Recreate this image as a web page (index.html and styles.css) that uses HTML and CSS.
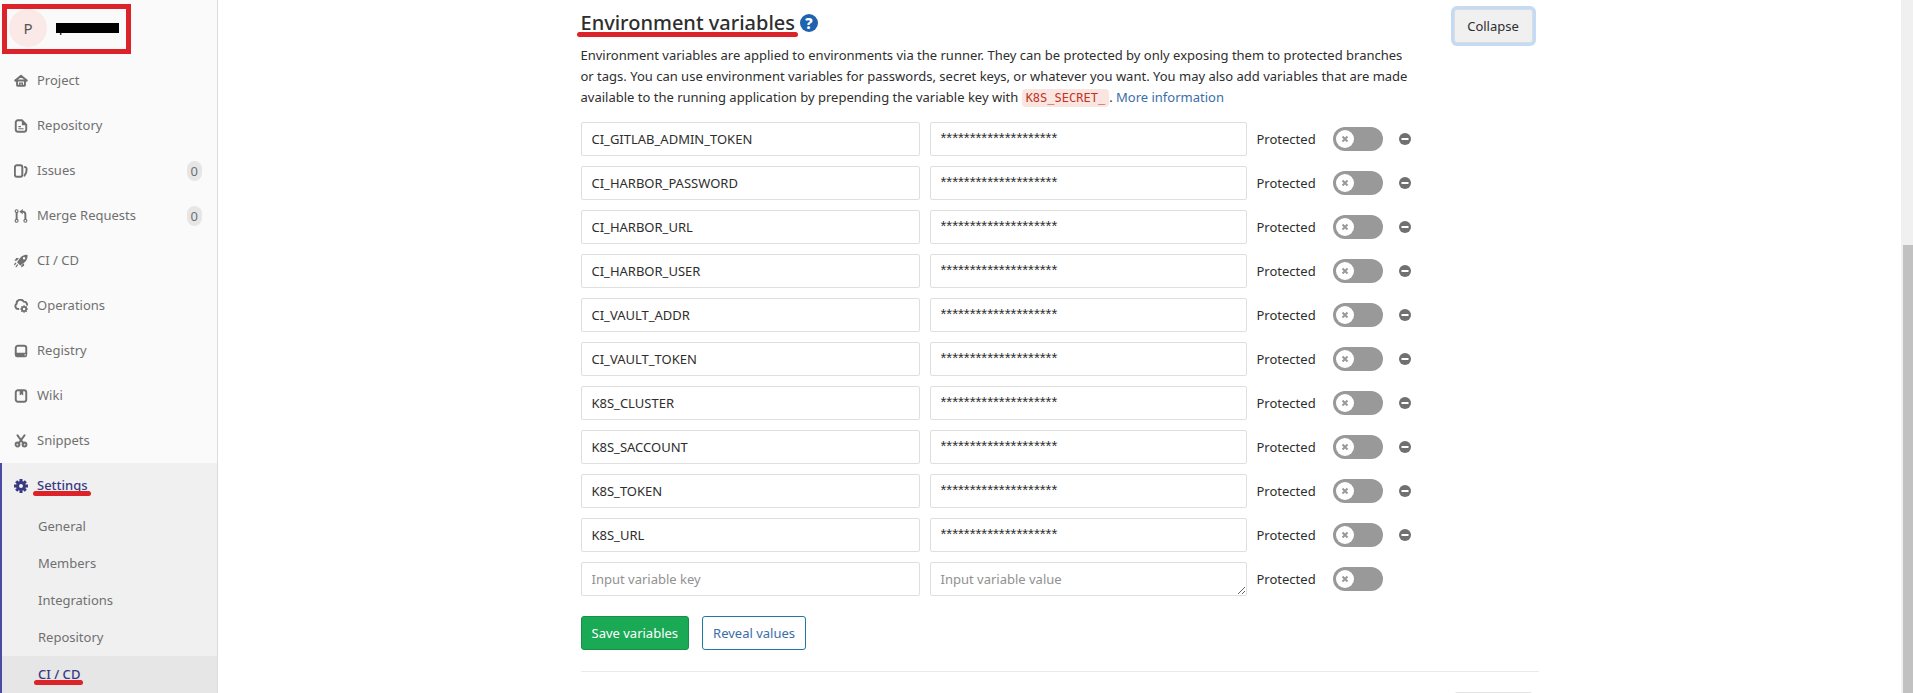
FILE: index.html
```html
<!DOCTYPE html>
<html lang="en">
<head>
<meta charset="utf-8">
<title>CI / CD Settings</title>
<link rel="stylesheet" href="styles.css">
</head>
<body>
<svg class="sprite" aria-hidden="true">
  <symbol id="home" viewBox="0 0 16 16"><path d="M1.500 7.500 8 2l6.500 5.500" fill="none" stroke="currentColor" stroke-width="2.200" stroke-linecap="round" stroke-linejoin="round"/><path d="M1 7.500h14M3.500 7v5.500q0 1 1 1h7q1 0 1-1V7" fill="none" stroke="currentColor" stroke-width="2.200"/><path d="M6.500 13v-2.500h3V13" fill="none" stroke="currentColor" stroke-width="1.500"/></symbol>
  <symbol id="doc" viewBox="0 0 16 16"><path d="M9 1.500H4.500A2.500 2.500 0 0 0 2 4v8a2.500 2.500 0 0 0 2.500 2.500h7A2.500 2.500 0 0 0 14 12V6.500z" fill="none" stroke="currentColor" stroke-width="2.200"/><path d="M9 1v6h6zM5 8h3v1.300H5zM5 10.500h6v1.300H5z" fill="currentColor"/></symbol>
  <symbol id="issues" viewBox="0 0 16 16"><rect x="1" y="1.500" width="8.500" height="13" rx="2.200" fill="none" stroke="currentColor" stroke-width="2.200"/><path d="M12.500 3.500q2 .3 2 2.300 0 5-2.500 7.500" fill="none" stroke="currentColor" stroke-width="2.200" stroke-linecap="round"/></symbol>
  <symbol id="merge" viewBox="0 0 16 16"><path d="M3 4.500v7M13 11.500V6q0-3-3-3H8" fill="none" stroke="currentColor" stroke-width="2.200"/><path d="M6 3l4-3v6z" fill="currentColor"/><circle cx="3" cy="2.500" r="1.600" fill="none" stroke="currentColor" stroke-width="1.300"/><circle cx="3" cy="13.500" r="1.700" fill="none" stroke="currentColor" stroke-width="1.300"/><circle cx="13" cy="13.500" r="1.700" fill="none" stroke="currentColor" stroke-width="1.300"/></symbol>
  <symbol id="rocket" viewBox="0 0 16 16"><path fill-rule="evenodd" d="M15.500 1Q10 .5 6.500 5L3.500 9.500l3.500 3.500 4.500-3Q16 6.500 15.500 1zM11.500 3.500a1.400 1.400 0 1 1 0 2.800 1.400 1.400 0 0 1 0-2.800z" fill="currentColor"/><path d="M5.500 4.500H2.500L.5 8l3-.5zM11.500 10.500v3L8 15.500l.5-3z" fill="currentColor"/><path d="M2 10.500.8 12M4 12.500 2.500 14.500" stroke="currentColor" stroke-width="1.400" stroke-linecap="round"/></symbol>
  <symbol id="cloud" viewBox="0 0 16 16"><path d="M5 11.500A3.300 3.300 0 0 1 3 5.500 4.300 4.300 0 0 1 11 3q3.500-.2 4 3.500" fill="none" stroke="currentColor" stroke-width="2.200" stroke-linecap="round"/><circle cx="11.500" cy="11.500" r="2.400" fill="none" stroke="currentColor" stroke-width="2"/><path d="M11.500 7.200v1.500M11.500 14.300v1.500M7.200 11.500h1.500M14.300 11.500h1.500M8.500 8.500l1 1M13.500 13.500l1 1M14.500 8.500l-1 1M9.500 13.500l-1 1" stroke="currentColor" stroke-width="1.600"/></symbol>
  <symbol id="disk" viewBox="0 0 16 16"><path d="M2 11V4.500A2.500 2.500 0 0 1 4.500 2h7A2.500 2.500 0 0 1 14 4.500V11" fill="none" stroke="currentColor" stroke-width="2.200"/><path fill-rule="evenodd" d="M1 10h14v2.500q0 2.500-2.500 2.500h-9Q1 15 1 12.500zM12 11.700v1.300h1.300v-1.300z" fill="currentColor"/></symbol>
  <symbol id="book" viewBox="0 0 16 16"><rect x="2" y="1.500" width="12" height="13" rx="2.500" fill="none" stroke="currentColor" stroke-width="2.200"/><path d="M6.500 2h4v5.500l-2-1.500-2 1.500z" fill="currentColor"/></symbol>
  <symbol id="scissors" viewBox="0 0 16 16"><path d="M4 1.500 11 11M12 1.500 5 11" stroke="currentColor" stroke-width="2.200" stroke-linecap="round"/><circle cx="4" cy="12" r="2.200" fill="none" stroke="currentColor" stroke-width="2.200"/><circle cx="12" cy="12" r="2.200" fill="none" stroke="currentColor" stroke-width="2.200"/></symbol>
  <symbol id="gear" viewBox="0 0 16 16"><circle cx="8" cy="8" r="4" fill="none" stroke="currentColor" stroke-width="3.500"/><path d="M8 0v3M8 13v3M0 8h3M13 8h3M2.500 2.500l2 2M11.500 11.500l2 2M13.500 2.500l-2 2M4.500 11.500l-2 2" stroke="currentColor" stroke-width="3.400"/></symbol>
  <symbol id="minus" viewBox="0 0 12 12"><circle cx="6" cy="6" r="6" fill="currentColor"/><path d="M2.500 6h7" stroke="#fff" stroke-width="2"/></symbol>
  <symbol id="cross" viewBox="0 0 18 18"><circle cx="9" cy="9" r="9" fill="#fff"/><path d="M6.500 6.500l5 5M11.500 6.500l-5 5" stroke="currentColor" stroke-width="2"/></symbol>
</svg>
<div class="page">
  <nav class="sidebar" aria-label="Project">
    <div class="project">
      <span class="avatar">P</span>
      <span class="project-name">p</span>
      <span class="frame"></span>
    </div>
    <a class="item" href="#"><svg class="icon"><use href="#home"/></svg>Project</a>
    <a class="item" href="#"><svg class="icon"><use href="#doc"/></svg>Repository</a>
    <a class="item" href="#"><svg class="icon"><use href="#issues"/></svg>Issues<span class="count">0</span></a>
    <a class="item" href="#"><svg class="icon"><use href="#merge"/></svg>Merge Requests<span class="count">0</span></a>
    <a class="item" href="#"><svg class="icon"><use href="#rocket"/></svg>CI / CD</a>
    <a class="item" href="#"><svg class="icon"><use href="#cloud"/></svg>Operations</a>
    <a class="item" href="#"><svg class="icon"><use href="#disk"/></svg>Registry</a>
    <a class="item" href="#"><svg class="icon"><use href="#book"/></svg>Wiki</a>
    <a class="item" href="#"><svg class="icon"><use href="#scissors"/></svg>Snippets</a>
    <div class="group">
      <a class="item current" href="#"><svg class="icon"><use href="#gear"/></svg><span class="marked">Settings</span></a>
      <a class="sub" href="#">General</a>
      <a class="sub" href="#">Members</a>
      <a class="sub" href="#">Integrations</a>
      <a class="sub" href="#">Repository</a>
      <a class="sub current" href="#"><span class="marked">CI / CD</span></a>
    </div>
  </nav>
  <main class="main">
    <div class="container">
      <section class="settings">
        <div class="content">
          <h4 class="title"><span class="marked">Environment variables</span>
            <a class="help" href="#" aria-label="Help">?</a></h4>
          <p class="intro">Environment variables are applied to environments via the runner. They can be protected by only exposing them to protected branches<br>or tags. You can use environment variables for passwords, secret keys, or whatever you want. You may also add variables that are made<br>available to the running application by prepending the variable key with <code>K8S_SECRET_</code>. <a href="#">More information</a></p>
          <form class="variables">
            <div class="row"><input class="field key" aria-label="Variable key" value="CI_GITLAB_ADMIN_TOKEN"><input class="field secret" aria-label="Variable value" value="********************"><label class="protect">Protected<span class="switch"><input type="checkbox"><svg class="knob"><use href="#cross"/></svg></span></label><button class="remove" type="button" aria-label="Remove"><svg><use href="#minus"/></svg></button></div>
            <div class="row"><input class="field key" aria-label="Variable key" value="CI_HARBOR_PASSWORD"><input class="field secret" aria-label="Variable value" value="********************"><label class="protect">Protected<span class="switch"><input type="checkbox"><svg class="knob"><use href="#cross"/></svg></span></label><button class="remove" type="button" aria-label="Remove"><svg><use href="#minus"/></svg></button></div>
            <div class="row"><input class="field key" aria-label="Variable key" value="CI_HARBOR_URL"><input class="field secret" aria-label="Variable value" value="********************"><label class="protect">Protected<span class="switch"><input type="checkbox"><svg class="knob"><use href="#cross"/></svg></span></label><button class="remove" type="button" aria-label="Remove"><svg><use href="#minus"/></svg></button></div>
            <div class="row"><input class="field key" aria-label="Variable key" value="CI_HARBOR_USER"><input class="field secret" aria-label="Variable value" value="********************"><label class="protect">Protected<span class="switch"><input type="checkbox"><svg class="knob"><use href="#cross"/></svg></span></label><button class="remove" type="button" aria-label="Remove"><svg><use href="#minus"/></svg></button></div>
            <div class="row"><input class="field key" aria-label="Variable key" value="CI_VAULT_ADDR"><input class="field secret" aria-label="Variable value" value="********************"><label class="protect">Protected<span class="switch"><input type="checkbox"><svg class="knob"><use href="#cross"/></svg></span></label><button class="remove" type="button" aria-label="Remove"><svg><use href="#minus"/></svg></button></div>
            <div class="row"><input class="field key" aria-label="Variable key" value="CI_VAULT_TOKEN"><input class="field secret" aria-label="Variable value" value="********************"><label class="protect">Protected<span class="switch"><input type="checkbox"><svg class="knob"><use href="#cross"/></svg></span></label><button class="remove" type="button" aria-label="Remove"><svg><use href="#minus"/></svg></button></div>
            <div class="row"><input class="field key" aria-label="Variable key" value="K8S_CLUSTER"><input class="field secret" aria-label="Variable value" value="********************"><label class="protect">Protected<span class="switch"><input type="checkbox"><svg class="knob"><use href="#cross"/></svg></span></label><button class="remove" type="button" aria-label="Remove"><svg><use href="#minus"/></svg></button></div>
            <div class="row"><input class="field key" aria-label="Variable key" value="K8S_SACCOUNT"><input class="field secret" aria-label="Variable value" value="********************"><label class="protect">Protected<span class="switch"><input type="checkbox"><svg class="knob"><use href="#cross"/></svg></span></label><button class="remove" type="button" aria-label="Remove"><svg><use href="#minus"/></svg></button></div>
            <div class="row"><input class="field key" aria-label="Variable key" value="K8S_TOKEN"><input class="field secret" aria-label="Variable value" value="********************"><label class="protect">Protected<span class="switch"><input type="checkbox"><svg class="knob"><use href="#cross"/></svg></span></label><button class="remove" type="button" aria-label="Remove"><svg><use href="#minus"/></svg></button></div>
            <div class="row"><input class="field key" aria-label="Variable key" value="K8S_URL"><input class="field secret" aria-label="Variable value" value="********************"><label class="protect">Protected<span class="switch"><input type="checkbox"><svg class="knob"><use href="#cross"/></svg></span></label><button class="remove" type="button" aria-label="Remove"><svg><use href="#minus"/></svg></button></div>
            <div class="row"><input class="field key" aria-label="Variable key" placeholder="Input variable key"><textarea class="field" rows="1" aria-label="Variable value" placeholder="Input variable value"></textarea><label class="protect">Protected<span class="switch"><input type="checkbox"><svg class="knob"><use href="#cross"/></svg></span></label></div>
            <div class="actions">
              <button class="btn save" type="button">Save variables</button>
              <button class="btn reveal" type="button">Reveal values</button>
            </div>
          </form>
        </div>
        <button class="btn toggle focused" type="button">Collapse</button>
      </section>
      <section class="settings next">
        <button class="btn toggle" type="button" aria-label="Expand"></button>
      </section>
    </div>
  </main>
  <div class="scrollbar"><div class="thumb"></div></div>
</div>
</body>
</html>
```
FILE: styles.css
```css
* { box-sizing: border-box; }
body {
  margin: 0;
  font: 13px/21px "Noto Sans", "Open Sans", sans-serif;
  color: #2e2e2e;
  background: #fff;
}
a { color: #3a6ea8; text-decoration: none; }
button, input, textarea { font: inherit; color: inherit; margin: 0; }
.sprite { position: absolute; width: 0; height: 0; }
.page { display: flex; height: 100vh; overflow: hidden; }

.sidebar {
  flex: 0 0 218px;
  background: #fafafa;
  border-right: 1px solid #dcdcdc;
}
.project {
  position: relative;
  display: flex;
  align-items: center;
  gap: 9px;
  height: 58px;
  padding: 0 0 2px 9px;
}
.avatar {
  width: 38px;
  height: 38px;
  border-radius: 50%;
  background: #fbe9e7;
  color: #555;
  font-size: 15px;
  line-height: 38px;
  text-align: center;
}
.project-name {
  width: 63px;
  height: 10px;
  background: #000;
  color: #000;
  line-height: 8px;
  padding-left: 3px;
}
.frame {
  position: absolute;
  left: 2px;
  top: 4px;
  width: 129px;
  height: 50px;
  border: 5px solid #dc2329;
}
.item {
  display: flex;
  align-items: center;
  height: 45px;
  padding: 0 15px 0 14px;
  color: #707070;
}
.icon { width: 14px; height: 14px; margin-right: 9px; }
.count {
  margin-left: auto;
  padding: 0 4px;
  border-radius: 10px;
  background: #e6e6e6;
  line-height: 20px;
}
.group { background: #f0f0f0; border-left: 2px solid #4b4ba3; }
.group .item { padding-left: 12px; }
.sub {
  display: flex;
  align-items: center;
  height: 37px;
  padding-left: 36px;
  color: #707070;
}
.item.current, .sub.current { color: #393982; font-weight: 500; }
.sub.current { background: #e6e6e6; }
.marked { position: relative; }
.marked::after {
  content: "";
  position: absolute;
  left: -4px;
  right: -3px;
  bottom: 0;
  height: 5px;
  border-radius: 3px;
  background: #dc2329;
}

.main { flex: 1; min-width: 0; }
.container { max-width: 990px; margin: 0 auto; padding: 0 16px; }
.settings {
  display: flex;
  justify-content: space-between;
  align-items: flex-start;
  padding: 9px 6px 21px 0;
  border-bottom: 1px solid #eaeaea;
}
.settings.next { justify-content: flex-end; padding-top: 20px; border: 0; }
.content { width: 833px; }
.title {
  display: flex;
  align-items: center;
  gap: 5px;
  margin: 0 0 8px;
  font-size: 20px;
  font-weight: 500;
  line-height: 28px;
}
.help {
  width: 18px;
  height: 18px;
  border-radius: 50%;
  background: #1f63ae;
  color: #fff;
  font-size: 15px;
  font-weight: 800;
  line-height: 18px;
  text-align: center;
}
.intro { margin: 0 0 14px; white-space: nowrap; }
code {
  padding: 2px 4px;
  border-radius: 4px;
  background: #fbe5e1;
  color: #c0341d;
  font: 12px/15px "DejaVu Sans Mono", monospace;
}
.variables { display: flex; flex-direction: column; gap: 10px; }
.row {
  display: grid;
  grid-template-columns: 339px 1fr 126px 21px;
  align-items: center;
  gap: 10px;
}
.field {
  min-width: 0;
  height: 34px;
  padding: 6px 10px;
  border: 1px solid #dfdfdf;
  border-radius: 2px;
  background: #fff;
  line-height: 20px;
}
.field.secret {
  padding: 4px 10px 8px;
  font: 15px/20px "Liberation Sans", Arial, sans-serif;
}
.field::placeholder { color: #919191; }
textarea.field { display: block; overflow: hidden; resize: both; }
.protect { display: flex; align-items: center; justify-content: space-between; }
.switch { display: grid; }
.switch input {
  grid-area: 1 / 1;
  appearance: none;
  width: 50px;
  height: 24px;
  border-radius: 12px;
  background: #999;
}
.knob {
  grid-area: 1 / 1;
  align-self: center;
  width: 18px;
  height: 18px;
  margin-left: 3px;
  color: #999;
  pointer-events: none;
}
.remove {
  height: 24px;
  padding: 0 0 0 6px;
  border: 0;
  background: none;
  color: #707070;
}
.remove svg { display: block; width: 12px; height: 12px; }
.actions { display: flex; gap: 13px; padding-top: 10px; }
.btn {
  height: 34px;
  padding: 0 10px;
  border: 1px solid #e3e3e3;
  border-radius: 3px;
  background: #fff;
}
.save { background: #1aaa55; border-color: #168f48; color: #fff; }
.reveal { border-color: #1f78a0; color: #3a6ea8; }
.toggle { width: 79px; }
.focused { background: #f0f0f0; border-color: #dcdcdc; box-shadow: 0 0 0 3px #c3dbf6; }

.scrollbar { flex: 0 0 12px; padding: 245px 0 0 2px; background: #f0f0f0; }
.thumb { height: 100%; background: #c1c1c1; }
```
